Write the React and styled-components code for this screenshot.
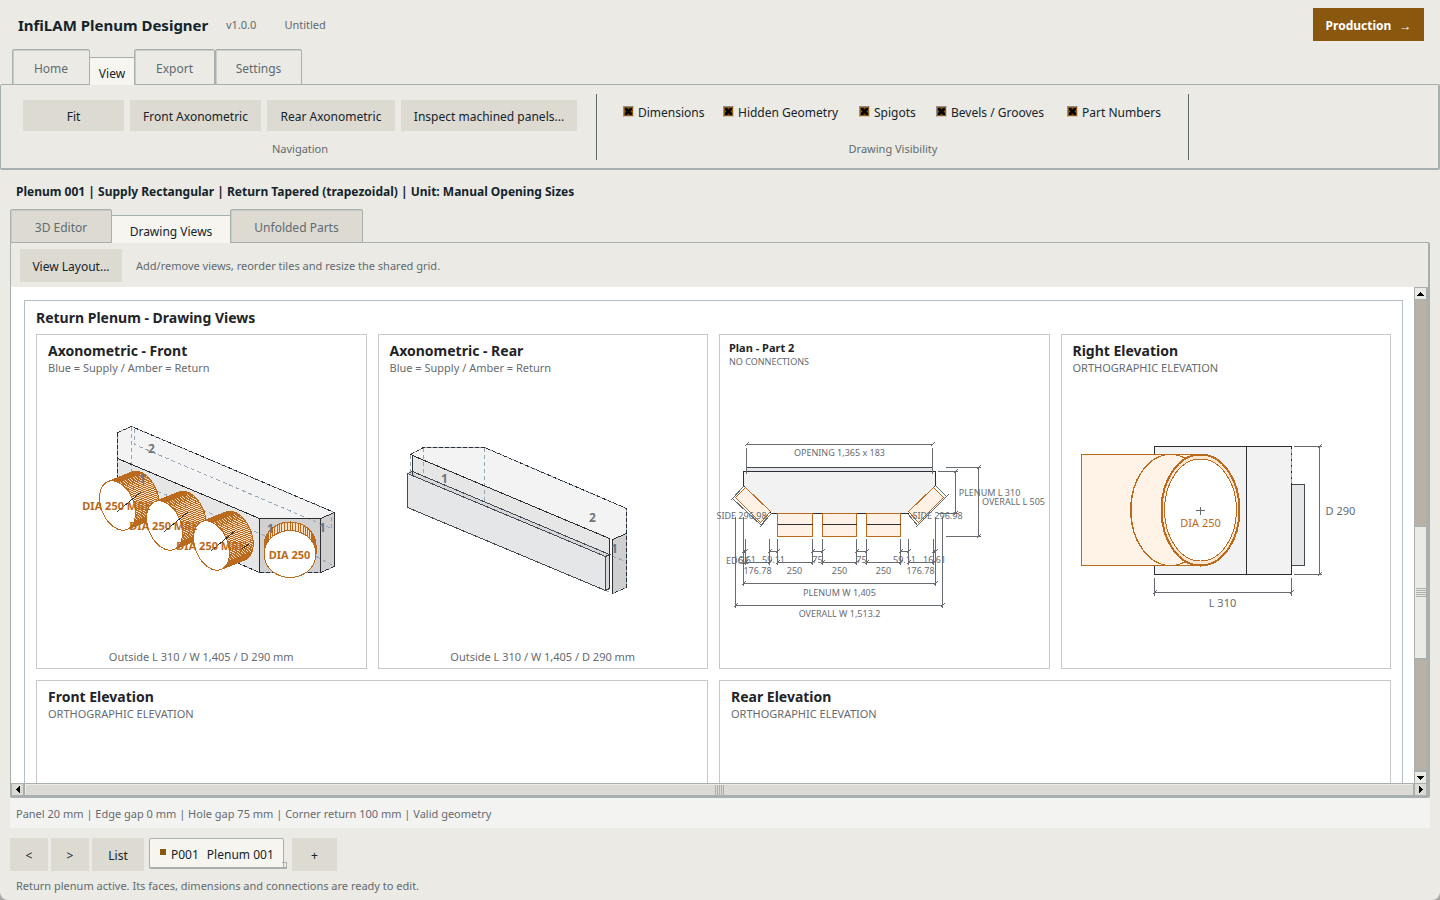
import { useState } from "react";
import styled, { createGlobalStyle, css } from "styled-components";

const line = "#a7b0ae";
const ink = "#14242c";
const muted = "#5f6b70";
const amber = "#b96a1c";
const dark = "#2c2e33";
const dim = "#666b71";

const ribbonTabs = [
  { name: "Home", w: 78 },
  { name: "View", w: 44 },
  { name: "Export", w: 81 },
  { name: "Settings", w: 87 },
];

const workTabs = [
  { name: "3D Editor", w: 102 },
  { name: "Drawing Views", w: 118 },
  { name: "Unfolded Parts", w: 133 },
];

const navActions = [
  { name: "Fit", w: 101 },
  { name: "Front Axonometric", w: 131 },
  { name: "Rear Axonometric", w: 128 },
  { name: "Inspect machined panels...", w: 176 },
];

const layers = [
  { name: "Dimensions", w: 82 },
  { name: "Hidden Geometry", w: 118 },
  { name: "Spigots", w: 59 },
  { name: "Bevels / Grooves", w: 113 },
  { name: "Part Numbers", w: 96 },
];

export default function App() {
  const [ribbon, setRibbon] = useState("View");
  const [work, setWork] = useState("Drawing Views");

  return (
    <Window>
      <GlobalStyle />
      <Header>
        <AppName>InfiLAM Plenum Designer</AppName>
        <Version>v1.0.0</Version>
        <Small>Untitled</Small>
        <Production>
          Production <Arrow>→</Arrow>
        </Production>
      </Header>

      <RibbonTabs>
        {ribbonTabs.map((t) => (
          <Tab key={t.name} $w={t.w} $h={36} $active={ribbon === t.name} onClick={() => setRibbon(t.name)}>
            {t.name}
          </Tab>
        ))}
      </RibbonTabs>
      <Ribbon>
        <Group>
          <Actions>
            {navActions.map((a) => (
              <Button key={a.name} $w={a.w} $h={31}>
                {a.name}
              </Button>
            ))}
          </Actions>
          <GroupName>Navigation</GroupName>
        </Group>
        <Separator />
        <Group $wide>
          <Checks>
            {layers.map((l) => (
              <Check key={l.name} $w={l.w}>
                <Box type="checkbox" defaultChecked />
                {l.name}
              </Check>
            ))}
          </Checks>
          <GroupName>Drawing Visibility</GroupName>
        </Group>
        <Separator />
      </Ribbon>

      <Summary>
        Plenum 001 | Supply Rectangular | Return Tapered (trapezoidal) | Unit: Manual Opening Sizes
      </Summary>

      <WorkTabs>
        {workTabs.map((t) => (
          <Tab key={t.name} $w={t.w} $h={34} $filled $active={work === t.name} onClick={() => setWork(t.name)}>
            {t.name}
          </Tab>
        ))}
      </WorkTabs>
      <Panel>
        <Toolbar>
          <Button $w={102} $h={33}>View Layout...</Button>
          <Small>Add/remove views, reorder tiles and resize the shared grid.</Small>
        </Toolbar>
        <CanvasRow>
          <Canvas>
            <Frame>
              <FrameTitle>Return Plenum - Drawing Views</FrameTitle>
              <Tiles>
                <Tile title="Axonometric - Front" sub="Blue = Supply / Amber = Return" caption="Outside L 310 / W 1,405 / D 290 mm">
                  <AxoFront />
                </Tile>
                <Tile title="Axonometric - Rear" sub="Blue = Supply / Amber = Return" caption="Outside L 310 / W 1,405 / D 290 mm">
                  <AxoRear />
                </Tile>
                <Tile compact title="Plan - Part 2" sub="NO CONNECTIONS">
                  <PlanPart />
                </Tile>
                <Tile title="Right Elevation" sub="ORTHOGRAPHIC ELEVATION">
                  <RightElevation />
                </Tile>
                <Tile wide title="Front Elevation" sub="ORTHOGRAPHIC ELEVATION" />
                <Tile wide title="Rear Elevation" sub="ORTHOGRAPHIC ELEVATION" />
              </Tiles>
            </Frame>
          </Canvas>
          <VScroll>
            <ScrollButton aria-label="Scroll up">
              <Glyph d="M3 0h1v1h1v1h1v1h1v1h-7v-1h1v-1h1v-1h1z" w={7} h={4} />
            </ScrollButton>
            <Track>
              <VThumb>
                <Grip />
              </VThumb>
            </Track>
            <ScrollButton aria-label="Scroll down">
              <Glyph d="M0 0h7v1h-1v1h-1v1h-1v1h-1v-1h-1v-1h-1v-1h-1z" w={7} h={4} />
            </ScrollButton>
          </VScroll>
        </CanvasRow>
        <HScroll>
          <ScrollButton $flat aria-label="Scroll left">
            <Glyph d="M4 0v7h-1v-1h-1v-1h-1v-1h-1v-1h1v-1h1v-1h1v-1z" w={4} h={7} />
          </ScrollButton>
          <HThumb>
            <Grip $upright />
          </HThumb>
          <ScrollButton $flat aria-label="Scroll right">
            <Glyph d="M0 0h1v1h1v1h1v1h1v1h-1v1h-1v1h-1v1h-1z" w={4} h={7} />
          </ScrollButton>
        </HScroll>
      </Panel>
      <Validity>Panel 20 mm | Edge gap 0 mm | Hole gap 75 mm | Corner return 100 mm | Valid geometry</Validity>

      <Plenums>
        <Button $w={38} $h={33}>&lt;</Button>
        <Button $w={38} $h={33}>&gt;</Button>
        <Button $w={52} $h={33}>List</Button>
        <PlenumTab>
          <Marker />
          <span>P001</span>
          <span>Plenum 001</span>
        </PlenumTab>
        <Button $w={45} $h={33}>+</Button>
      </Plenums>
      <Footer>Return plenum active. Its faces, dimensions and connections are ready to edit.</Footer>
    </Window>
  );
}

function Tile({ title, sub, caption, compact, wide, children }) {
  return (
    <Card $wide={wide}>
      <CardHead $compact={compact}>
        <CardTitle $compact={compact}>{title}</CardTitle>
        <CardSub $compact={compact}>{sub}</CardSub>
      </CardHead>
      <Drawing>{children}</Drawing>
      {caption && <Caption>{caption}</Caption>}
    </Card>
  );
}

function Glyph({ d, w, h }) {
  return (
    <svg width={w} height={h} viewBox={`0 0 ${w} ${h}`} shapeRendering="crispEdges">
      <path d={d} />
    </svg>
  );
}

/* sheet coordinates name the middle of a pixel, hence the half */
function Sheet({ x, y, h, label, children }) {
  return (
    <svg
      width={328}
      height={h}
      viewBox={`${x - 0.5} ${y - 0.5} 328 ${h}`}
      shapeRendering="crispEdges"
      overflow="visible"
      fill="none"
      role="img"
      aria-label={label}
    >
      {children}
    </svg>
  );
}

/* open cylinder: a and b span the mouth, d runs to the wall */
function Spigot({ c, a, b, d, n = 84 }) {
  const at = (t) => [c[0] + a[0] * Math.cos(t) + b[0] * Math.sin(t), c[1] + a[1] * Math.cos(t) + b[1] * Math.sin(t)];
  const strips = [];
  for (let i = 0; i < n; i++) {
    const t = (i / n) * Math.PI * 2;
    const [x1, y1] = at(t);
    const [x2, y2] = at(t + (Math.PI * 2) / n);
    if ((y2 - y1) * d[0] - (x2 - x1) * d[1] > 0) {
      strips.push(`${x1},${y1} ${x2},${y2} ${x2 + d[0]},${y2 + d[1]} ${x1 + d[0]},${y1 + d[1]}`);
    }
  }
  const mouth = Array.from({ length: 36 }, (_, i) => at((i / 18) * Math.PI).join(",")).join(" ");
  return (
    <g stroke={amber}>
      {strips.map((p) => (
        <polygon key={p} points={p} fill="#f8dfc8" />
      ))}
      <polygon points={mouth} fill="#fff" />
    </g>
  );
}

function AxoFront() {
  const round = { a: [18, 7.6], b: [0, 23.5], d: [23.7, -9.5] };
  return (
    <Sheet x={37} y={375} h={272} label="Front axonometric">
      <polygon points="117,458 259,518 259,572 117,512" fill="#e6e6e6" />
      <polygon points="117,432 131,426 334,512 320,518 259,518 117,458" fill="#f3f3f3" />
      <polygon points="259,518 320,518 320,572 259,572" fill="#d0d0d0" />
      <polygon points="320,518 334,512 334,566 320,572" fill="#cfcfcf" />
      <g stroke="#93a5b8">
        <path d="M117 432L131 426L334 512M117 432V478M334 512V566L320 572H259L236 562" />
        <path strokeDasharray="4 3" d="M131 426V480M134 428V444L331 528V512M131 480L266 536M316 556L334 566" />
      </g>
      <g stroke={dark}>
        <path strokeDasharray="4 2" d="M117 432L131 426L334 512M117 432V478M334 566L320 572H259L236 562" />
        <path d="M117 458L259 518H320L334 512V566M259 518V572M320 518V572" />
      </g>
      <Spigot c={[117, 505]} {...round} />
      <Spigot c={[164, 525]} {...round} />
      <Spigot c={[211, 545]} {...round} />
      <Spigot c={[289.5, 553.5]} a={[26, 0]} b={[0, 23.5]} d={[0, -8.5]} n={60} />
      <path stroke={dark} d="M117 511L141 491M164 531L188 511M211 550L235 530M242 548L249 543" />
      <DimText $bold $amber x={116} y={509}>DIA 250 MBE</DimText>
      <DimText $bold $amber x={163} y={529}>DIA 250 MBE</DimText>
      <DimText $bold $amber x={210} y={549}>DIA 250 MBE</DimText>
      <DimText $bold $amber x={289} y={558}>DIA 250</DimText>
      <PartNumber x={151} y={452}>2</PartNumber>
      <PartNumber x={142} y={482}>1</PartNumber>
      <PartNumber x={270} y={532}>1</PartNumber>
      <PartNumber x={322} y={531}>1</PartNumber>
    </Sheet>
  );
}

function AxoRear() {
  return (
    <Sheet x={379} y={375} h={272} label="Rear axonometric">
      <polygon points="412,455 423,447 484,447 626,508 626,533 612,539 609,538" fill="#f3f3f3" />
      <polygon points="412,455 609,538 609,554 412,471" fill="#e6e6e6" />
      <polygon points="407,473 412,471 609,554 609,588 605,590 605,556" fill="#d6d8dc" />
      <polygon points="407,473 605,556 605,590 407,507" fill="#e5e6e8" />
      <polygon points="612,539 626,533 626,587 612,593" fill="#cfcfcf" />
      <g stroke="#93a5b8">
        <path d="M410 454L423 447H484L626 508V587L612 593" />
        <path strokeDasharray="4 3" d="M410 454V472M423 447V476M484 447V501M612 556L626 561M605 590L612 593" />
      </g>
      <g stroke={dark}>
        <path strokeDasharray="4 2" d="M410 454L423 447H484L626 508V587L612 593" />
        <path d="M412 474V455L609 538V588M612 593V539L626 533" />
      </g>
      <g stroke="#454a50">
        <path d="M407 473L605 556V590L407 507ZM407 473L412 471L609 554L605 556M609 588L605 590" />
      </g>
      <PartNumber x={444} y={482}>1</PartNumber>
      <PartNumber x={592} y={521}>2</PartNumber>
      <PartNumber x={614} y={552}>1</PartNumber>
    </Sheet>
  );
}

const tick = (x, y) => `M${x - 2} ${y + 2}L${x + 2} ${y - 2}`;
const across = (y, x1, x2) => `M${x1} ${y}H${x2}${tick(x1, y)}${tick(x2, y)}`;
const down = (x, y1, y2) => `M${x} ${y1}V${y2}${tick(x, y1)}${tick(x, y2)}`;

function PlanPart() {
  return (
    <Sheet x={720} y={368} h={300} label="Plan, part 2">
      <rect x={746} y={467} width={186} height={4} fill="#e5e6e8" stroke="#454a50" />
      <polygon points="743,471 935,471 935,485 908,513 771,513 743,485" fill="#f2f2f2" stroke={dark} />
      <g stroke={amber} fill="#fff1e5">
        <polygon points="745,487 770,511 760,522 735,497" />
        <polygon points="933,487 908,511 918,522 943,497" />
        <path d="M777 513H812V536H777ZM822 513H856V536H822ZM866 513H900V536H866Z" />
      </g>
      <path stroke={dark} d="M777 524H812M822 524H856M866 524H900" />
      <g stroke={dim}>
        <path d={across(444, 746, 932)} />
        <path d="M746 447V473M932 447V473" />
        <path d="M732 498L761 525M732 498L743 486M760 525L771 513" />
        <path d="M946 496L917 525M946 496L936 486M917 525L908 514" />
        <path d={tick(732, 498) + tick(761, 525) + tick(917, 525) + tick(946, 496)} />
        <path d="M735 516V607M743 516V585M745 538V564M769 538V564M777 538V564M812 538V564M822 538V564M856 538V564M866 538V564M900 538V564M908 538V564M933 538V564M935 516V585M942 516V607" />
        <path d={across(551, 743, 745) + across(551, 769, 777) + across(551, 812, 822)} />
        <path d={across(551, 856, 866) + across(551, 900, 908) + across(551, 933, 935)} />
        <path d={across(562, 745, 769) + across(562, 777, 812) + across(562, 822, 856)} />
        <path d={across(562, 866, 900) + across(562, 908, 933)} />
        <path d={across(583, 743, 935) + across(605, 735, 942)} />
        <path d={down(955, 471, 513) + down(978, 467, 536)} />
        <path d="M937 471H957M937 513H957M945 467H980M945 536H980" />
      </g>
      <DimText $tiny x={839} y={455}>OPENING 1,365 x 183</DimText>
      <DimText $tiny x={741} y={518}>SIDE 296.98</DimText>
      <DimText $tiny x={937} y={518}>SIDE 296.98</DimText>
      <DimText $tiny x={737} y={563}>EDGE</DimText>
      <DimText $tiny x={744} y={562}>16.61</DimText>
      <DimText $tiny x={773} y={562}>59.11</DimText>
      <DimText $tiny x={817} y={562}>75</DimText>
      <DimText $tiny x={861} y={562}>75</DimText>
      <DimText $tiny x={904} y={562}>59.11</DimText>
      <DimText $tiny x={934} y={562}>16.61</DimText>
      <DimText $tiny x={757} y={573}>176.78</DimText>
      <DimText $tiny x={794} y={573}>250</DimText>
      <DimText $tiny x={839} y={573}>250</DimText>
      <DimText $tiny x={883} y={573}>250</DimText>
      <DimText $tiny x={920} y={573}>176.78</DimText>
      <DimText $tiny x={839} y={595}>PLENUM W 1,405</DimText>
      <DimText $tiny x={839} y={616}>OVERALL W 1,513.2</DimText>
      <DimText $tiny x={989} y={495}>PLENUM L 310</DimText>
      <DimText $tiny x={1013} y={504}>OVERALL L 505</DimText>
    </Sheet>
  );
}

function RightElevation() {
  return (
    <Sheet x={1062} y={375} h={272} label="Right elevation">
      <path d="M1291 484H1304V565H1291Z" fill="#e5e6e8" stroke="#454a50" />
      <path d="M1154 446H1291V574H1154Z" fill="#f2f2f2" />
      <path d="M1291 446V484" stroke="#93a5b8" />
      <path d="M1291 446V484" stroke={dark} strokeDasharray="2 4" />
      <path d="M1291 484V574H1154V446H1291M1246 446V574" stroke={dark} />
      <g stroke={amber}>
        <path d="M1170 454H1081V565H1170" fill="#fff2e6" />
        <path d="M1170 454A40 55.5 0 0 0 1170 565H1200V454Z" fill="#fff2e6" />
        <ellipse cx={1170} cy={509.5} rx={39.5} ry={55.5} />
        <ellipse cx={1200} cy={509.5} rx={39} ry={55.5} fill="#fde6d2" strokeWidth={2} />
        <ellipse cx={1200} cy={509.5} rx={36} ry={51} fill="#fff" />
      </g>
      <g stroke={dim}>
        <path d="M1195 510H1204M1199.5 506V514M1293 446H1321M1293 574H1321M1154 577V595M1291 577V595" />
        <path d={down(1319, 446, 574) + across(592, 1154, 1291)} />
      </g>
      <DimText $amber x={1200} y={526}>DIA 250</DimText>
      <DimText x={1340} y={514}>D 290</DimText>
      <DimText x={1222} y={606}>L 310</DimText>
    </Sheet>
  );
}

const GlobalStyle = createGlobalStyle`
  * {
    box-sizing: border-box;
  }
  body {
    margin: 0;
    background: #a9aaa7;
    font-family: "Noto Sans", "Open Sans", sans-serif;
    font-size: 12px;
    line-height: 16px;
    color: ${ink};
  }
  button, input {
    font: inherit;
    color: inherit;
    margin: 0;
  }
`;

const Window = styled.div`
  display: flex;
  flex-direction: column;
  height: 100vh;
  min-height: 600px;
  background: #ebeae4;
  border-radius: 0 0 8px 8px;
  overflow: hidden;
  white-space: nowrap;
`;

const Header = styled.header`
  display: flex;
  align-items: center;
  height: 49px;
  padding: 0 16px 0 18px;
`;

const AppName = styled.h1`
  margin: 0;
  min-width: 195px;
  font-size: 15px;
  font-weight: 700;
  line-height: 20px;
`;

const Small = styled.span`
  font-size: 11px;
  color: ${muted};
`;

const Version = styled(Small)`
  margin: 0 28px 0 13px;
`;

const Production = styled.button`
  margin-left: auto;
  min-width: 111px;
  height: 33px;
  padding: 2px 12px 0;
  border: none;
  background: #8a570f;
  color: #fff;
  font-weight: 700;
`;

const Arrow = styled.span`
  margin-left: 5px;
  font-weight: 400;
`;

const TabStrip = styled.nav`
  display: flex;
  align-items: flex-end;
  position: relative;
  z-index: 1;
  margin-bottom: -1px;
`;

const RibbonTabs = styled(TabStrip)`
  padding-left: 12px;
`;

const WorkTabs = styled(TabStrip)`
  padding-left: 10px;
`;

const Tab = styled.button`
  min-width: ${(p) => p.$w}px;
  height: ${(p) => p.$h}px;
  padding: 4px 0 0;
  border: 1px solid ${line};
  border-radius: 2px 2px 0 0;
  background: ${(p) => (p.$filled ? "#dddad2" : "#ebeae4")};
  box-shadow: inset 1px 1px #c9ccc7;
  color: ${muted};
  ${(p) =>
    p.$active &&
    css`
      height: 28px;
      border-width: 1px 0 0;
      border-radius: 0;
      background: #f6f5f0;
      box-shadow: none;
      color: ${ink};
    `}
`;

const Ribbon = styled.section`
  display: flex;
  flex: none;
  height: 86px;
  padding: 9px 0 0 22px;
  border: solid ${line};
  border-width: 1px 2px 2px 1px;
  border-radius: 2px;
`;

const Group = styled.div`
  display: flex;
  flex-direction: column;
  justify-content: space-between;
  height: 66px;
  padding: 6px ${(p) => (p.$wide ? 25 : 19)}px 3px ${(p) => (p.$wide ? 26 : 0)}px;
`;

const Actions = styled.div`
  display: flex;
  gap: 6px;
`;

const Button = styled.button`
  min-width: ${(p) => p.$w}px;
  height: ${(p) => p.$h}px;
  padding: 2px 4px 0;
  border: none;
  background: #dddad2;
`;

const GroupName = styled.div`
  font-size: 11px;
  color: ${muted};
  text-align: center;
`;

const Separator = styled.div`
  width: 1px;
  height: 66px;
  background: #5f6b6b;
`;

const Checks = styled.div`
  display: flex;
  gap: 18px;
  padding-top: 5px;
`;

const Check = styled.label`
  display: flex;
  gap: 4px;
  min-width: ${(p) => p.$w}px;
`;

const Box = styled.input`
  appearance: none;
  flex: none;
  display: grid;
  place-items: center;
  width: 11px;
  height: 11px;
  margin-top: 1px;
  border: 1px solid;
  border-color: #8f9190 #d0ccc2 #d0ccc2 #8f9190;
  background: #8a570f;
  &:checked::before {
    content: "";
    width: 7px;
    height: 7px;
    background: #000;
    clip-path: polygon(0 0, 29% 0, 50% 22%, 71% 0, 100% 0, 100% 29%, 78% 50%, 100% 71%, 100% 100%, 71% 100%, 50% 78%, 29% 100%, 0 100%, 0 71%, 22% 50%, 0 29%);
  }
`;

const Summary = styled.h2`
  margin: 0;
  padding: 13px 16px 9px;
  font-size: 12px;
  font-weight: 700;
  line-height: 17px;
`;

const Panel = styled.main`
  display: flex;
  flex: 1;
  flex-direction: column;
  min-height: 0;
  margin: 0 10px;
  border: solid ${line};
  border-width: 1px 2px 2px 1px;
  border-radius: 2px;
`;

const Toolbar = styled.div`
  display: flex;
  align-items: center;
  gap: 14px;
  flex: none;
  height: 44px;
  padding: 1px 9px 0;
`;

const CanvasRow = styled.div`
  display: flex;
  flex: 1;
  min-height: 0;
`;

const Canvas = styled.div`
  flex: 1;
  min-width: 0;
  padding: 13px 11px 0 13px;
  overflow: hidden;
  background: #fff;
`;

const Frame = styled.section`
  padding: 0 11px 11px;
  border: 1px solid #b3bfc8;
`;

const FrameTitle = styled.h2`
  margin: 0;
  font-size: 14px;
  line-height: 33px;
  color: #1f2429;
`;

const Tiles = styled.div`
  display: grid;
  grid-template-columns: repeat(4, minmax(0, 1fr));
  grid-auto-rows: 335px;
  gap: 11px;
`;

const Card = styled.article`
  display: flex;
  flex-direction: column;
  grid-column: span ${(p) => (p.$wide ? 2 : 1)};
  border: 1px solid #c8c8c8;
`;

const CardHead = styled.div`
  padding: 6px ${(p) => (p.$compact ? 9 : 11)}px 0;
`;

const CardTitle = styled.h3`
  margin: 0;
  font-size: ${(p) => (p.$compact ? 11 : 14)}px;
  line-height: ${(p) => (p.$compact ? 14 : 20)}px;
  color: #1f2429;
`;

const CardSub = styled.div`
  font-size: ${(p) => (p.$compact ? 9 : 11)}px;
  line-height: ${(p) => (p.$compact ? 13 : 14)}px;
  color: ${dim};
`;

const Drawing = styled.div`
  display: flex;
  justify-content: center;
`;

const Caption = styled.div`
  font-size: 11px;
  line-height: 20px;
  color: ${dim};
  text-align: center;
`;

const DimText = styled.text`
  fill: ${(p) => (p.$amber ? amber : dim)};
  font-size: ${(p) => (p.$tiny ? 9 : 11)}px;
  font-weight: ${(p) => (p.$bold ? 700 : 400)};
  text-anchor: middle;
`;

const PartNumber = styled.text`
  fill: #6e747b;
  font-size: 12px;
  font-weight: 700;
  text-anchor: middle;
`;

const VScroll = styled.div`
  display: flex;
  flex-direction: column;
  width: 14px;
  border: solid ${line};
  border-width: 1px 1px 0;
  background: ${line};
`;

const ScrollButton = styled.button`
  display: grid;
  place-items: center;
  flex: none;
  width: 11px;
  height: 11px;
  padding: 0;
  border: none;
  background: ${(p) => (p.$flat ? "#dcdad4" : "#ebeae4")};
`;

const Track = styled.div`
  display: grid;
  flex: 1;
  grid-template-rows: 226fr 134fr 110fr;
  margin: 1px 0 2px;
  background: #b8b2a6;
`;

const VThumb = styled.div`
  display: grid;
  place-items: center;
  grid-row: 2;
  border: solid ${line};
  border-width: 1px 1px 2px 0;
  background: #ebeae4;
`;

const Grip = styled.div`
  width: ${(p) => (p.$upright ? 9 : 10)}px;
  height: ${(p) => (p.$upright ? 10 : 9)}px;
  background: repeating-linear-gradient(${(p) => (p.$upright ? "to right" : "to bottom")}, ${line} 0 1px, transparent 1px 2px);
`;

const HScroll = styled.div`
  display: flex;
  flex: none;
  gap: 2px;
  height: 13px;
  padding: 1px 2px 1px 1px;
  background: ${line};
`;

const HThumb = styled.div`
  display: grid;
  place-items: center;
  flex: 1;
  border: solid #ebeae4;
  border-width: 1px 0 0 1px;
  background: #dcdad4;
`;

const Validity = styled.div`
  flex: none;
  height: 30px;
  margin: 0 10px;
  padding: 0 6px;
  background: #f3f3f2;
  font-size: 11px;
  line-height: 31px;
  color: ${dim};
`;

const Plenums = styled.div`
  display: flex;
  gap: 3px;
  padding: 10px 10px 0;
`;

const PlenumTab = styled.button`
  position: relative;
  display: flex;
  align-items: center;
  gap: 8px;
  min-width: 135px;
  height: 31px;
  margin: 0 5px 0 2px;
  padding: 3px 8px 0 10px;
  border: solid ${line};
  border-width: 1px 1px 2px;
  border-radius: 2px;
  background: #f6f5f0;
  &::after {
    content: "";
    position: absolute;
    right: -4px;
    bottom: -2px;
    width: 4px;
    height: 4px;
    border: solid ${line};
    border-width: 1px 1px 2px 0;
  }
`;

const Marker = styled.i`
  width: 6px;
  height: 6px;
  margin: 0 -3px 5px 0;
  background: #8a570f;
`;

const Footer = styled.footer`
  padding: 7px 16px 6px;
  font-size: 11px;
  color: ${muted};
`;
